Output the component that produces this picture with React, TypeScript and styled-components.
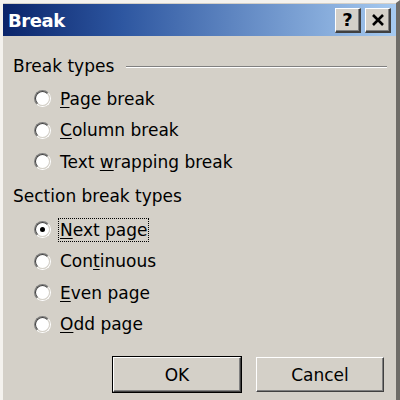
import React from "react";
import styled, { createGlobalStyle } from "styled-components";

const Global = createGlobalStyle`
  html, body { margin: 0; padding: 0; background: #d4d0c8; }
  body { width: 400px; height: 400px; overflow: hidden; }
`;

const Window = styled.div`
  box-sizing: border-box;
  width: 400px;
  height: 400px;
  background: #d4d0c8;
  border-top: 3px solid #f4f2ee;
  border-left: 3px solid #f4f2ee;
  border-right: 4px solid #6e6c68;
  padding-top: 1px;
  display: flex;
  flex-direction: column;
  font-family: "DejaVu Sans", Verdana, sans-serif;
  color: #000;
`;

const TitleBar = styled.div`
  height: 32px;
  display: flex;
  align-items: center;
  padding: 0 5px 0 5px;
  background: linear-gradient(90deg, #0a246a 0%, #2d56a0 30%, #a6caf0 100%);
`;

const Title = styled.div`
  flex: 1;
  color: #fff;
  font-weight: bold;
  font-size: 18px;
  letter-spacing: -0.4px;
`;

const CaptionButton = styled.div<{ $gap?: number }>`
  box-sizing: border-box;
  width: 26px;
  height: 25px;
  margin-left: ${(p) => p.$gap ?? 0}px;
  background: #d4d0c8;
  border-top: 1px solid #fff;
  border-left: 1px solid #fff;
  border-right: 2px solid #404040;
  border-bottom: 2px solid #404040;
  box-shadow: inset -1px -1px 0 #808080;
  display: flex;
  align-items: center;
  justify-content: center;
  font-weight: bold;
  font-size: 18px;
  line-height: 1;
`;

const Content = styled.div`
  padding: 19px 9px 0 10px;
  display: flex;
  flex-direction: column;
`;

const GroupHeader = styled.div<{ $top?: number; $bottom?: number }>`
  height: 22px;
  margin-top: ${(p) => p.$top ?? 0}px;
  margin-bottom: ${(p) => p.$bottom ?? 6}px;
  display: flex;
  align-items: center;
  font-size: 17px;
  white-space: nowrap;
`;

const Groove = styled.div`
  flex: 1;
  height: 1px;
  margin-left: 12px;
  margin-top: 1px;
  background: #808080;
  border-bottom: 1px solid #fff;
`;

const Row = styled.div`
  height: 31.5px;
  display: flex;
  align-items: center;
  padding-left: 21px;
  font-size: 17px;
`;

const RadioOuter = styled.div`
  box-sizing: border-box;
  width: 17px;
  height: 17px;
  border-radius: 50%;
  border: 1px solid;
  border-color: #808080 #fff #fff #808080;
  flex: none;
`;

const RadioInner = styled.div`
  box-sizing: border-box;
  width: 100%;
  height: 100%;
  border-radius: 50%;
  border: 1px solid;
  border-color: #404040 #d4d0c8 #d4d0c8 #404040;
  background: #fff;
  display: flex;
  align-items: center;
  justify-content: center;
`;

const Dot = styled.div`
  width: 5px;
  height: 5px;
  border-radius: 50%;
  background: #000;
`;

const Label = styled.span<{ $focus?: boolean }>`
  margin-left: ${(p) => (p.$focus ? 8 : 9)}px;
  padding: 1px ${(p) => (p.$focus ? 1 : 0)}px;
  outline: ${(p) => (p.$focus ? "1px dotted #000" : "none")};
  line-height: 20px;
`;

const U = styled.span`
  text-decoration: underline;
  text-underline-offset: 2px;
`;

const Buttons = styled.div`
  display: flex;
  justify-content: flex-end;
  gap: 13px;
  margin-top: 16px;
  padding-right: 2px;
`;

const Button = styled.div<{ $default?: boolean }>`
  box-sizing: border-box;
  width: 130px;
  height: 37px;
  background: #d4d0c8;
  border: 1px solid ${(p) => (p.$default ? "#000" : "#d4d0c8")};
  display: flex;
  font-size: 17px;
`;

const ButtonFace = styled.div`
  flex: 1;
  border-top: 1px solid #fff;
  border-left: 1px solid #fff;
  border-right: 1px solid #404040;
  border-bottom: 1px solid #404040;
  box-shadow: inset -1px -1px 0 #808080;
  display: flex;
  align-items: center;
  justify-content: center;
`;

const Radio = ({ checked }: { checked?: boolean }) => (
  <RadioOuter>
    <RadioInner>{checked && <Dot />}</RadioInner>
  </RadioOuter>
);

const CloseGlyph = () => (
  <svg width="14" height="12" viewBox="0 0 14 12">
    <path d="M2 1 L12 11 M12 1 L2 11" stroke="#000" strokeWidth="2.6" strokeLinecap="butt" />
  </svg>
);

export default function App() {
  return (
    <>
      <Global />
      <Window>
        <TitleBar>
          <Title>Break</Title>
          <CaptionButton>?</CaptionButton>
          <CaptionButton $gap={4}>
            <CloseGlyph />
          </CaptionButton>
        </TitleBar>
        <Content>
          <GroupHeader>
            Break types
            <Groove />
          </GroupHeader>
          <Row>
            <Radio />
            <Label>
              <U>P</U>age break
            </Label>
          </Row>
          <Row>
            <Radio />
            <Label>
              <U>C</U>olumn break
            </Label>
          </Row>
          <Row>
            <Radio />
            <Label>
              Text <U>w</U>rapping break
            </Label>
          </Row>
          <GroupHeader $top={7.5} $bottom={7}>
            Section break types
          </GroupHeader>
          <Row>
            <Radio checked />
            <Label $focus>
              <U>N</U>ext page
            </Label>
          </Row>
          <Row>
            <Radio />
            <Label>
              Con<U>t</U>inuous
            </Label>
          </Row>
          <Row>
            <Radio />
            <Label>
              <U>E</U>ven page
            </Label>
          </Row>
          <Row>
            <Radio />
            <Label>
              <U>O</U>dd page
            </Label>
          </Row>
          <Buttons>
            <Button $default>
              <ButtonFace>OK</ButtonFace>
            </Button>
            <Button>
              <ButtonFace>Cancel</ButtonFace>
            </Button>
          </Buttons>
        </Content>
      </Window>
    </>
  );
}
